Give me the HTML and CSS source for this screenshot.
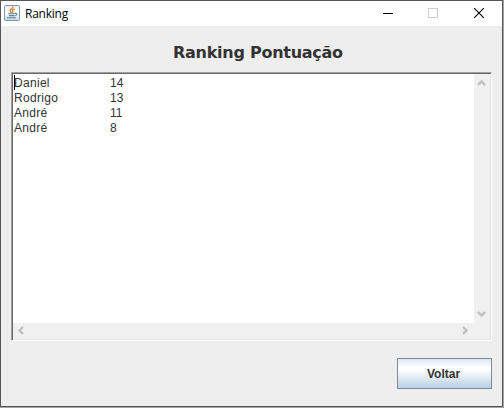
FILE: index.html
```html
<!DOCTYPE html>
<html lang="pt">
<head>
<meta charset="utf-8">
<title>Ranking</title>
<link rel="stylesheet" href="styles.css">
</head>
<body>
<main class="window">
  <header class="titlebar">
    <svg class="app-icon" width="16" height="16" viewBox="0 0 16 16">
      <defs><linearGradient id="tile" x2="0" y2="1"><stop stop-color="#e4ecf2"/><stop offset=".5" stop-color="#fff"/><stop offset="1" stop-color="#c4d3df"/></linearGradient></defs>
      <rect x=".5" y=".5" width="15" height="15" rx="1" fill="url(#tile)" stroke="#7f98ad"/>
      <path d="M8.8 1.5C9.5 3.5 5 4.4 6.2 6.4L7.4 8M10.5 4C7.6 5 8.2 6 8.8 6.6L8 8" fill="none" stroke="#f08523" stroke-width="1.4"/>
      <path d="M4 8.7h7M5 10.6h5.5M3 12.8h9M11 8.5c2.3-.5 2.3 1.4.3 2" fill="none" stroke="#5382a1" stroke-width="1.1"/>
    </svg>
    <span class="caption">Ranking</span>
    <svg class="control" width="46" height="25" viewBox="0 0 46 25" shape-rendering="crispEdges"><path d="M18 12.5h10" stroke="#000"/></svg>
    <svg class="control" width="45" height="25" viewBox="0 0 45 25" shape-rendering="crispEdges"><path d="M17.5 7.5h9v9h-9z" fill="none" stroke="#ccc"/></svg>
    <svg class="control" width="46" height="25" viewBox="0 0 46 25"><path d="M18.2 7.2l9.6 9.6M27.8 7.2l-9.6 9.6" stroke="#000" stroke-width="1.1"/></svg>
  </header>
  <h1 class="heading">Ranking Pontuação</h1>
  <section class="scroll-pane">
    <div class="text-area">
      <div class="row"><span class="name">Daniel</span><span>14</span></div>
      <div class="row"><span class="name">Rodrigo</span><span>13</span></div>
      <div class="row"><span class="name">André</span><span>11</span></div>
      <div class="row"><span class="name">André</span><span>8</span></div>
      <i class="caret"></i>
    </div>
    <div class="vbar">
      <svg width="9" height="8" viewBox="0 0 9 8"><path d="M1 6L4.5 2.5L8 6" class="arrow"/></svg>
      <svg width="9" height="8" viewBox="0 0 9 8"><path d="M1 2L4.5 5.5L8 2" class="arrow"/></svg>
    </div>
    <div class="hbar">
      <svg width="8" height="9" viewBox="0 0 8 9"><path d="M6 1L2.5 4.5L6 8" class="arrow"/></svg>
      <svg width="8" height="9" viewBox="0 0 8 9"><path d="M2 1L5.5 4.5L2 8" class="arrow"/></svg>
    </div>
  </section>
  <button class="back">Voltar</button>
</main>
</body>
</html>
```
FILE: styles.css
```css
body {
  margin: 0;
  background: #a5a5a5;
  overflow: hidden;
}
.window {
  box-sizing: border-box;
  width: 503px;
  height: 407px;
  border: 1px solid #555;
  background: #eee;
  display: flex;
  flex-direction: column;
}
.titlebar {
  display: flex;
  height: 25px;
  background: #fff;
}
.app-icon {
  margin: 4px 5px 0 3px;
}
.caption {
  flex: 1;
  font: 12px/25px "Open Sans", sans-serif;
  letter-spacing: -0.25px;
  color: #000;
}
.heading {
  margin: 16px 0 0 172px;
  font: bold 16px/21px "DejaVu Sans", sans-serif;
  letter-spacing: -0.26px;
  white-space: nowrap;
  color: #333;
}
.scroll-pane {
  box-sizing: border-box;
  width: 481px;
  height: 269px;
  margin: 9px 0 0 10px;
  border: 1px solid;
  border-color: #a0a0a0 #fff #fff #a0a0a0;
  box-shadow: inset 1px 1px #696969, inset -1px -1px #e3e3e3;
  padding: 1px;
  display: grid;
  grid-template: 249px 16px / 461px 16px;
  background: #f0f0f0;
  background-clip: padding-box;
}
.text-area {
  position: relative;
  background: #fff;
  padding-top: 2px;
  font: 12px/15px "Liberation Sans", sans-serif;
  color: #333;
}
.row {
  display: flex;
  padding-left: 1px;
  height: 15px;
}
.name {
  width: 96px;
  letter-spacing: 0.3px;
}
.caret {
  position: absolute;
  left: 1px;
  top: 1px;
  width: 1px;
  height: 15px;
  background: #000;
}
.vbar {
  display: flex;
  flex-direction: column;
  justify-content: space-between;
  align-items: center;
  padding: 5px 1px 5px 0;
}
.hbar {
  display: flex;
  justify-content: space-between;
  align-items: center;
  padding: 0 5px 1px 4px;
}
.arrow {
  fill: none;
  stroke: #bfbfbf;
  stroke-width: 2.4;
}
.back {
  width: 95px;
  height: 31px;
  margin: 17px 0 0 396px;
  padding: 0 2px 0 0;
  border: 1px solid #7a8a99;
  background: linear-gradient(#dde8f3, #fff 30%, #fff 36%, #b8cfe5);
  font: bold 12px "Liberation Sans", sans-serif;
  color: #333;
}
```
